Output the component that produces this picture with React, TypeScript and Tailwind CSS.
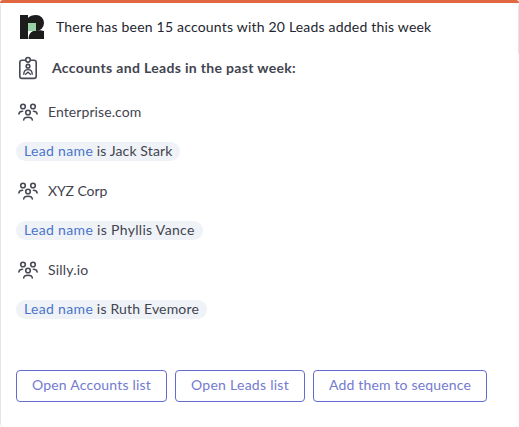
import type { ReactNode } from "react";

const accounts = [
  {
    name: "Enterprise.com",
    lead: "Jack Stark",
    nameTracking: "tracking-[0.08px]",
    leadTracking: "tracking-[0.12px]",
  },
  {
    name: "XYZ Corp",
    lead: "Phyllis Vance",
    nameTracking: "tracking-[-0.1px]",
    leadTracking: "tracking-[0.32px]",
  },
  {
    name: "Silly.io",
    lead: "Ruth Evemore",
    nameTracking: "tracking-[0.2px]",
    leadTracking: "tracking-[0.17px]",
  },
];

const actions = [
  { label: "Open Accounts list", style: "w-[151px] tracking-[0.2px]" },
  { label: "Open Leads list", style: "w-[130px] tracking-[0.27px]" },
  { label: "Add them to sequence", style: "w-[174px] tracking-[0.17px]" },
];

function Logo() {
  return (
    <svg width="24" height="24" viewBox="0 0 24 24" className="shrink-0">
      <g fill="#1c1c1c">
        <path d="M0 0H8V24H0Z" />
        <path d="M8 3C9.5 1 12.5 0 16 0A8 8 0 0 1 16 16H8Z" />
        <path d="M8.6 24C8.6 19.5 11 15.5 16 15.5L20.5 15.2L24 16V24Z" />
      </g>
      <rect x="8" y="8" width="8" height="8" fill="#98d0a8" />
    </svg>
  );
}

function BadgeIcon() {
  return (
    <svg
      width="20"
      height="24"
      viewBox="0 0 20 24"
      fill="none"
      stroke="#474955"
      strokeWidth="1.6"
      strokeLinecap="round"
      className="shrink-0"
    >
      <path d="M7.5 4.3H4A2.2 2.2 0 0 0 1.8 6.5V20.2A2.2 2.2 0 0 0 4 22.4H16A2.2 2.2 0 0 0 18.2 20.2V6.5A2.2 2.2 0 0 0 16 4.3H12.5" />
      <circle cx="10" cy="3.8" r="2.3" />
      <circle cx="10" cy="10.2" r="1.8" />
      <path d="M5.8 18.2C5.8 15.4 7.4 13.6 10 13.6S14.2 15.4 14.2 18.2M7.6 18.2L10 16.1L12.4 18.2" strokeWidth="1.4" />
    </svg>
  );
}

function PeopleIcon() {
  return (
    <svg
      width="20"
      height="18"
      viewBox="0 0 20 18"
      fill="none"
      stroke="#474955"
      strokeWidth="1.6"
      strokeLinecap="round"
      className="shrink-0"
    >
      <circle cx="5" cy="3.5" r="2.3" />
      <circle cx="15" cy="3.5" r="2.3" />
      <circle cx="10" cy="9.5" r="2.3" />
      <path d="M.9 11C1.1 9.2 2.5 8.3 4.6 8.3M19.1 11C18.9 9.2 17.5 8.3 15.4 8.3" />
      <path d="M5.7 17C5.9 15 7.3 14.3 10 14.3S14.1 15 14.3 17" />
    </svg>
  );
}

function Pill({ children }: { children: ReactNode }) {
  return (
    <p className="flex h-[19px] w-fit items-center whitespace-pre rounded-full bg-[#eff3f7] px-2 pb-0.5">
      {children}
    </p>
  );
}

export default function App() {
  return (
    <div className="h-[427px] w-[519px] overflow-hidden bg-white font-['Lato',sans-serif] text-[14px] leading-5 text-[#42444f]">
      <div className="h-[3px] rounded-t-sm bg-[#e0673f]" />
      <div className="relative h-[424px] rounded-l border-l border-[#e5e5e7] pl-[15px]">
        <div className="absolute top-0 right-0 h-[51px] w-2 rounded-tr border-r border-[#e5e5e7]" />

        <header className="flex h-12 items-center gap-3 pl-1 text-[#24262f]">
          <Logo />
          <h1 className="whitespace-nowrap tracking-[0.2px]">
            There has been 15 accounts with 20 Leads added this week
          </h1>
        </header>

        <div className="flex h-[34px] items-center gap-[14px] pl-[2px]">
          <BadgeIcon />
          <h2 className="whitespace-nowrap font-bold tracking-[0.33px]">
            Accounts and Leads in the past week:
          </h2>
        </div>

        <ul className="pt-[17px]">
          {accounts.map((account) => (
            <li key={account.name} className="h-[79px]">
              <div className="flex h-5 items-center gap-[10px] pl-[2px]">
                <PeopleIcon />
                <span className={account.nameTracking}>{account.name}</span>
              </div>
              <div className="pt-5">
                <Pill>
                  <span className="tracking-[0.33px] text-[#4b74cc]">
                    Lead name
                  </span>
                  <span className={account.leadTracking}> is {account.lead}</span>
                </Pill>
              </div>
            </li>
          ))}
        </ul>

        <div className="flex gap-2 pt-[31px]">
          {actions.map((action) => (
            <button
              key={action.label}
              className={`h-8 shrink-0 whitespace-nowrap rounded border border-[#666bd0] pb-0.5 text-[#747ad0] ${action.style}`}
            >
              {action.label}
            </button>
          ))}
        </div>
      </div>
    </div>
  );
}
